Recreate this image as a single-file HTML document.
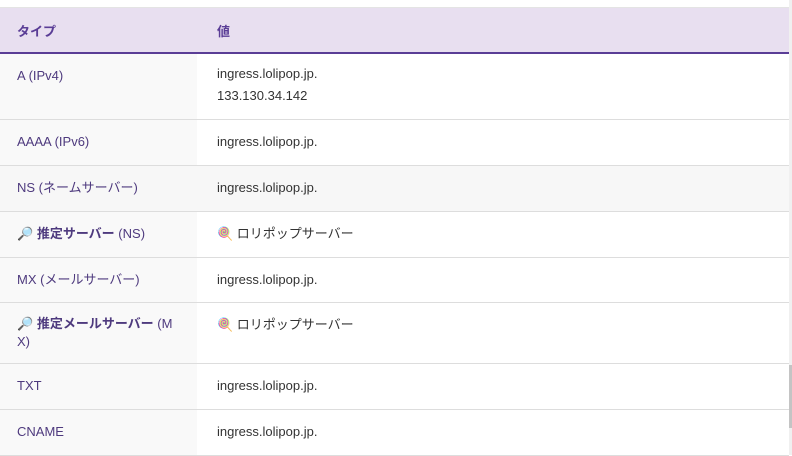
<!DOCTYPE html>
<html><head><meta charset="utf-8"><style>
body{margin:0;width:792px;height:455px;overflow:hidden;background:#fff;font-family:"Liberation Sans","Noto Sans CJK JP",sans-serif;font-size:13px;}
.sb{position:absolute;left:789px;top:0;width:3px;height:455px;background:#f0f0f0}
.th{position:absolute;left:789px;top:365px;width:3px;height:63px;background:#c4c4c4}
table{position:absolute;top:7px;left:0;width:789px;border-collapse:collapse;}
th{background:#e8dff0;color:#5a3d96;font-weight:bold;text-align:left;height:44px;padding:0 17px;border-top:1px solid #e4e4e4;border-bottom:2px solid #5a3d96;font-size:13px}
th+th{padding-left:20px}
td{border-bottom:1px solid #dddddd;padding:0 17px;vertical-align:top;color:#333;}
td+td{padding-left:20px}
td:first-child{width:163px;background:#f9f9f9;color:#4e3a7e;}
tr.g td{background:#f7f7f7}
.c{padding-top:12px;line-height:20px}
b{font-weight:bold}
</style></head><body>
<table>
<tr><th>タイプ</th><th>値</th></tr>
<tr style="height:66px"><td><div class="c">A (IPv4)</div></td><td><div class="c" style="line-height:22px;padding-top:9px">ingress.lolipop.jp.<br>133.130.34.142</div></td></tr>
<tr style="height:46px"><td><div class="c">AAAA (IPv6)</div></td><td><div class="c">ingress.lolipop.jp.</div></td></tr>
<tr class="g" style="height:46px"><td><div class="c">NS (ネームサーバー)</div></td><td><div class="c">ingress.lolipop.jp.</div></td></tr>
<tr style="height:46px"><td><div class="c">🔎 <b>推定サーバー</b> (NS)</div></td><td><div class="c">🍭 ロリポップサーバー</div></td></tr>
<tr style="height:45px"><td><div class="c">MX (メールサーバー)</div></td><td><div class="c">ingress.lolipop.jp.</div></td></tr>
<tr style="height:61px"><td><div class="c" style="line-height:18px">🔎 <b>推定メールサーバー</b> (M<br>X)</div></td><td><div class="c">🍭 ロリポップサーバー</div></td></tr>
<tr style="height:46px"><td><div class="c">TXT</div></td><td><div class="c">ingress.lolipop.jp.</div></td></tr>
<tr style="height:46px"><td><div class="c">CNAME</div></td><td><div class="c">ingress.lolipop.jp.</div></td></tr>
</table>
<div class="sb"></div><div class="th"></div>
</body></html>
